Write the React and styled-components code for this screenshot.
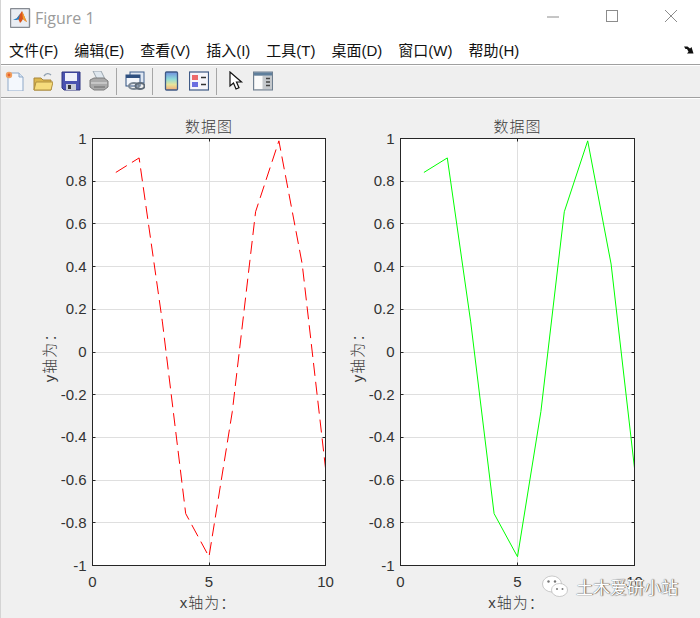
import React from "react";
import styled, { createGlobalStyle } from "styled-components";

const GlobalStyle = createGlobalStyle`
  html, body {
    margin: 0;
    padding: 0;
    background: #f0f0f0;
  }
`;

const UI_FONT = `"Liberation Sans", "Noto Sans CJK SC", sans-serif`;

const Window = styled.div`
  width: 700px;
  height: 618px;
  display: flex;
  flex-direction: column;
  position: relative;
  overflow: hidden;
  background: #f0f0f0;
  font-family: ${UI_FONT};
  box-sizing: border-box;
  border-left: 1px solid #d4d4d4;
`;

const TitleBar = styled.div`
  height: 35px;
  flex: none;
  display: flex;
  align-items: center;
  background: #fff;
  padding-left: 9px;
`;

const TitleText = styled.span`
  font-family: "Open Sans", sans-serif;
  font-size: 16px;
  color: #9b9b9b;
  margin-left: 4px;
`;

const WindowButtons = styled.div`
  margin-left: auto;
  display: flex;
  height: 100%;
`;

const WindowButton = styled.div`
  width: 59px;
  display: flex;
  align-items: center;
  justify-content: center;
  padding-bottom: 4px;
  box-sizing: border-box;
`;

const MenuBar = styled.div`
  height: 29px;
  flex: none;
  display: flex;
  align-items: center;
  gap: 16px;
  padding: 0 8px;
  background: #fff;
  border-bottom: 1px solid #a0a0a0;
  font-size: 15px;
  color: #111;
`;

const MenuItem = styled.span`
  white-space: nowrap;
`;

const MenuArrow = styled.span`
  margin-left: auto;
  margin-right: -2px;
  display: flex;
`;

const Toolbar = styled.div`
  height: 33px;
  flex: none;
  display: flex;
  align-items: center;
  gap: 8px;
  padding: 0 0 1px 4px;
  background: #efefef;
  border-top: 1px solid #fff;
  border-bottom: 1px solid #a0a0a0;
  box-sizing: border-box;
`;

const ToolIcon = styled.svg`
  width: 20px;
  height: 20px;
  flex: none;
  display: block;
`;

const Separator = styled.div`
  width: 1px;
  height: 27px;
  margin-left: -1px;
  background: #a6a6a6;
`;

const FigureArea = styled.div`
  flex: 1;
  display: flex;
  padding-left: 29px;
  background: #f0f0f0;
  border-top: 1px solid #fff;
`;

const ChartSvg = styled.svg`
  width: 308px;
  height: 519px;
  flex: none;
  display: block;
  overflow: visible;
`;

const Watermark = styled.div`
  position: absolute;
  left: 541px;
  top: 574px;
  display: flex;
  align-items: center;
  gap: 8px;
  font-family: "Noto Sans CJK SC", sans-serif;
  font-size: 17px;
  color: #fff;
  text-shadow: 0 0 1px #444, 1px 0 1px #666;
`;

const data = [0.841, 0.909, 0.141, -0.757, -0.959, -0.279, 0.657, 0.989, 0.412, -0.544];
const yTicks = [1, 0.8, 0.6, 0.4, 0.2, 0, -0.2, -0.4, -0.6, -0.8, -1];
const xTicks = [0, 5, 10];

const AX = { left: 62.5, top: 39.5, bottom: 466.5 };
const sy = (v) => AX.top + ((1 - v) / 2) * (AX.bottom - AX.top);
const snap = (v) => Math.floor(v) + 0.5;

const Plot = ({ color, dashed, right }) => {
  const sx = (v) => AX.left + (v / 10) * (right - AX.left);
  const pts = data.map((v, i) => `${sx(i + 1)},${sy(v)}`).join(" ");
  const cx = (AX.left + right) / 2;
  const cy = (AX.top + AX.bottom) / 2;
  const mid = snap(sx(5));
  return (
    <ChartSvg viewBox="0 0 308 519">
      <rect x={AX.left} y={AX.top} width={right - AX.left} height={AX.bottom - AX.top} fill="#fff" />
      {yTicks.slice(1, -1).map((t) => (
        <line key={t} x1={AX.left} x2={right} y1={snap(sy(t))} y2={snap(sy(t))} stroke="#dfdfdf" />
      ))}
      <line x1={mid} x2={mid} y1={AX.top} y2={AX.bottom} stroke="#dfdfdf" />
      <polyline
        points={pts}
        fill="none"
        stroke={color}
        strokeWidth="1"
        strokeDasharray={dashed ? "13 6" : undefined}
      />
      {yTicks.slice(1, -1).map((t) => (
        <g key={t} stroke="#262626">
          <line x1={AX.left} x2={AX.left + 3} y1={snap(sy(t))} y2={snap(sy(t))} />
          <line x1={right - 3} x2={right} y1={snap(sy(t))} y2={snap(sy(t))} />
        </g>
      ))}
      <g stroke="#262626">
        <line x1={mid} x2={mid} y1={AX.top} y2={AX.top + 3} />
        <line x1={mid} x2={mid} y1={AX.bottom - 3} y2={AX.bottom} />
      </g>
      <rect
        x={AX.left}
        y={AX.top}
        width={right - AX.left}
        height={AX.bottom - AX.top}
        fill="none"
        stroke="#262626"
      />
      <g fontFamily="Liberation Sans, sans-serif" fontSize="15" fill="#333">
        {yTicks.map((t) => (
          <text key={t} x={AX.left - 6} y={sy(t) + 5} textAnchor="end">
            {t}
          </text>
        ))}
        {xTicks.map((t) => (
          <text key={t} x={sx(t)} y={AX.bottom + 21} textAnchor="middle">
            {t}
          </text>
        ))}
      </g>
      <g fontFamily="Liberation Sans, Noto Sans CJK SC, sans-serif" fontSize="15" fontWeight="300" fill="#3c3c3c">
        <text x={cx} y={AX.top - 7} textAnchor="middle" letterSpacing="1">
          数据图
        </text>
        <text x={cx - 1} y={AX.bottom + 42} textAnchor="middle" letterSpacing="1">
          x轴为：
        </text>
        <text
          transform={`translate(${AX.left - 38} ${cy + 2}) rotate(-90)`}
          textAnchor="middle"
          letterSpacing="1"
        >
          y轴为：
        </text>
      </g>
    </ChartSvg>
  );
};

const MatlabLogo = () => (
  <svg width="21" height="20" viewBox="0 0 21 20">
    <rect x="0.5" y="0.5" width="19" height="19" rx="1" fill="#e9edf3" stroke="#868b92" strokeWidth="1.4" />
    <path d="M3 12l4-2 3-4 2-3c1 2 3 7 5 11-2-1-3-2-4-3-1 2-2 3-3 4-1-3-2-4-3-5z" fill="#d9541e" />
    <path d="M3 12l4-2 3-4-1 5-2 1z" fill="#2c7fc1" />
    <path d="M12 3c1 2 3 7 5 11-2-1-3-2-4-3z" fill="#f0a030" />
  </svg>
);

const NewIcon = () => (
  <ToolIcon viewBox="0 0 20 20">
    <path d="M3 2h11l4 4v14H3z" fill="#f4f8fd" stroke="#8fa9c8" />
    <path d="M14 2v4h4" fill="#d6e3f2" stroke="#8fa9c8" />
    <circle cx="4" cy="4" r="3.2" fill="#f0a060" />
    <circle cx="4" cy="4" r="1.4" fill="#e8622a" />
  </ToolIcon>
);

const OpenIcon = () => (
  <ToolIcon viewBox="0 0 20 20">
    <path d="M11 5c2-3 5-3 7-1" fill="none" stroke="#8fa0b0" strokeWidth="1.4" />
    <path d="M1 7h7l2 2h8v10H1z" fill="#dcb74e" stroke="#a8863a" />
    <path d="M1 19l2-8h17l-2 8z" fill="#f6dc7c" stroke="#b09040" />
  </ToolIcon>
);

const SaveIcon = () => (
  <ToolIcon viewBox="0 0 20 20">
    <path d="M1 1h18v18H3l-2-2z" fill="#4a52b0" stroke="#2f3580" />
    <rect x="4" y="2" width="12" height="8" fill="#eef0fa" />
    <rect x="5" y="13" width="10" height="6" fill="#c8cbd8" />
    <rect x="7" y="14" width="3" height="4" fill="#333" />
  </ToolIcon>
);

const PrintIcon = () => (
  <ToolIcon viewBox="0 0 20 20">
    <path d="M4 0h8l4 8H8z" fill="#dfe7ee" stroke="#9aa4ad" />
    <path d="M1 9l4-2h10l4 3v6l-4 3H5l-4-3z" fill="#a9a9a9" stroke="#7d7d7d" />
    <path d="M2 12h16" stroke="#e4e4e4" />
    <path d="M5 16h11" stroke="#6a6a6a" />
  </ToolIcon>
);

const LinkIcon = () => (
  <ToolIcon viewBox="0 0 20 20">
    <rect x="5" y="1" width="14" height="11" fill="#dfe7f2" stroke="#3e5f8c" />
    <rect x="1" y="4" width="14" height="11" fill="#f3f6fb" stroke="#2f5080" />
    <rect x="1" y="4" width="14" height="3" fill="#2f5080" />
    <ellipse cx="9" cy="15" rx="5" ry="3" fill="none" stroke="#7b8794" strokeWidth="2" />
    <ellipse cx="15" cy="15" rx="4.5" ry="3" fill="none" stroke="#5f6b78" strokeWidth="2" />
  </ToolIcon>
);

const ColorbarIcon = () => (
  <ToolIcon viewBox="0 0 20 20">
    <defs>
      <linearGradient id="cbar" x1="0" y1="0" x2="0" y2="1">
        <stop offset="0" stopColor="#6f8fe0" />
        <stop offset="0.4" stopColor="#8fdcd8" />
        <stop offset="0.7" stopColor="#e8e49a" />
        <stop offset="1" stopColor="#f0a878" />
      </linearGradient>
    </defs>
    <rect x="4.5" y="1" width="12" height="18" rx="1" fill="url(#cbar)" stroke="#3f5a86" strokeWidth="1.3" />
  </ToolIcon>
);

const LegendIcon = () => (
  <ToolIcon viewBox="0 0 20 20">
    <rect x="0.5" y="1" width="19" height="18" fill="#f6f6fb" stroke="#3f5a86" strokeWidth="1.2" />
    <rect x="3" y="4" width="6" height="5" fill="#ee6a6a" />
    <rect x="3" y="11" width="6" height="5" fill="#6a6ee0" />
    <path d="M12 6.5h5M12 13.5h5" stroke="#333" strokeWidth="1.4" />
  </ToolIcon>
);

const CursorIcon = () => (
  <ToolIcon viewBox="0 0 20 20">
    <path d="M5 1v14l3.5-3 2.5 6 3-1.3-2.5-5.7h5z" fill="#fff" stroke="#111" strokeWidth="1.2" />
  </ToolIcon>
);

const PanelIcon = () => (
  <ToolIcon viewBox="0 0 20 20">
    <rect x="0.5" y="1" width="19" height="18" fill="#c4c8cc" stroke="#6f7f90" />
    <rect x="1" y="1.5" width="18" height="3" fill="#5f7f9c" />
    <rect x="1.5" y="5" width="8" height="13" fill="#fbfbfb" />
    <path d="M13 7.5h4M13 11h4M13 14.5h4" stroke="#444" strokeWidth="1.4" />
  </ToolIcon>
);

const WeChatIcon = () => (
  <svg width="26" height="23" viewBox="0 0 26 23">
    <ellipse cx="10" cy="9" rx="9.5" ry="8" fill="#fff" stroke="#aaa" strokeWidth="0.6" />
    <ellipse cx="17.5" cy="15" rx="8" ry="6.5" fill="#fff" stroke="#aaa" strokeWidth="0.6" />
    <circle cx="6.5" cy="6.5" r="1.2" fill="#777" />
    <circle cx="13" cy="6.5" r="1.2" fill="#777" />
    <circle cx="15" cy="14" r="1" fill="#777" />
    <circle cx="20.5" cy="14" r="1" fill="#777" />
  </svg>
);

const menus = ["文件(F)", "编辑(E)", "查看(V)", "插入(I)", "工具(T)", "桌面(D)", "窗口(W)", "帮助(H)"];

const App = () => (
  <>
    <GlobalStyle />
    <Window>
      <TitleBar>
        <MatlabLogo />
        <TitleText>Figure 1</TitleText>
        <WindowButtons>
          <WindowButton>
            <svg width="14" height="14" viewBox="0 0 14 14">
              <path d="M1 8h12" stroke="#8c8c8c" />
            </svg>
          </WindowButton>
          <WindowButton>
            <svg width="14" height="14" viewBox="0 0 14 14">
              <rect x="1.5" y="1.5" width="11" height="11" fill="none" stroke="#8c8c8c" />
            </svg>
          </WindowButton>
          <WindowButton>
            <svg width="14" height="14" viewBox="0 0 14 14">
              <path d="M1 1l12 12M13 1L1 13" stroke="#8c8c8c" />
            </svg>
          </WindowButton>
        </WindowButtons>
      </TitleBar>
      <MenuBar>
        {menus.map((m) => (
          <MenuItem key={m}>{m}</MenuItem>
        ))}
        <MenuArrow>
          <svg width="10" height="8" viewBox="0 0 10 8">
            <path d="M0 0.5h3.5l2.5 2 1.5-1.5 2 6.5-6.5 0 1.5-1.8-1.5-2.7-1.5 0z" fill="#111" />
          </svg>
        </MenuArrow>
      </MenuBar>
      <Toolbar>
        <NewIcon />
        <OpenIcon />
        <SaveIcon />
        <PrintIcon />
        <Separator />
        <LinkIcon />
        <Separator />
        <ColorbarIcon />
        <LegendIcon />
        <Separator />
        <CursorIcon />
        <PanelIcon />
      </Toolbar>
      <FigureArea>
        <Plot color="#ff0000" dashed right={295.5} />
        <Plot color="#00ff00" right={296.5} />
      </FigureArea>
      <Watermark>
        <WeChatIcon />
        <span>土木爱研小站</span>
      </Watermark>
    </Window>
  </>
);

export default App;
